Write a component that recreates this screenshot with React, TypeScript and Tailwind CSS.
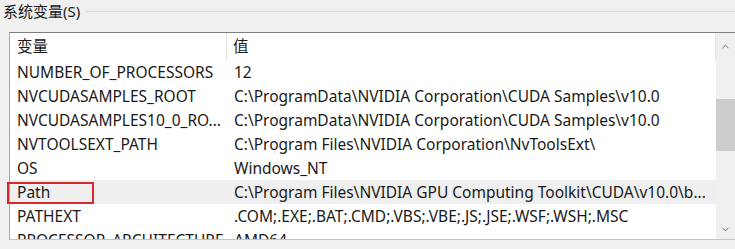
import { ChevronUp, ChevronDown } from "lucide-react";

// ------------------ Data ------------------
interface EnvVar {
  name: string;
  value: string;
  selected?: boolean;
}

const rows: EnvVar[] = [
  { name: "NUMBER_OF_PROCESSORS", value: "12" },
  { name: "NVCUDASAMPLES_ROOT", value: "C:\\ProgramData\\NVIDIA Corporation\\CUDA Samples\\v10.0" },
  { name: "NVCUDASAMPLES10_0_RO...", value: "C:\\ProgramData\\NVIDIA Corporation\\CUDA Samples\\v10.0" },
  { name: "NVTOOLSEXT_PATH", value: "C:\\Program Files\\NVIDIA Corporation\\NvToolsExt\\" },
  { name: "OS", value: "Windows_NT" },
  {
    name: "Path",
    value: "C:\\Program Files\\NVIDIA GPU Computing Toolkit\\CUDA\\v10.0\\b...",
    selected: true,
  },
  { name: "PATHEXT", value: ".COM;.EXE;.BAT;.CMD;.VBS;.VBE;.JS;.JSE;.WSF;.WSH;.MSC" },
  { name: "PROCESSOR_ARCHITECTURE", value: "AMD64" },
];

const font = "font-['Noto_Sans','Noto_Sans_CJK_SC',sans-serif]";

// ------------------ Component ------------------
const App = () => {
  return (
    <div
      className={`relative w-[735px] h-[249px] overflow-hidden bg-[#f0f0f0] text-[15.5px] text-[#1a1a1a] ${font}`}
    >
      {/* Group title */}
      <div className="flex items-center h-[22px] pl-[3px]">
        <span className="leading-none text-[15px]">系统变量(S)</span>
        <div className="flex-1 h-px bg-[#dcdcdc] ml-[6px]" />
      </div>

      {/* List box */}
      <div className="mt-[10px] ml-[9px] h-[208px] flex border-t border-l border-b border-t-[#7f7f7f] border-l-[#a8a8a8] border-b-[#c4c4c4] bg-white overflow-hidden">
        <div className="flex-1 overflow-hidden">
          {/* Header */}
          <div className="flex h-[27px] items-center">
            <div className="w-[217px] h-full pl-[7px] pt-px flex items-center border-r border-[#e5e5e5]">
              变量
            </div>
            <div className="flex-1 h-full pl-[6px] pt-px flex items-center border-r border-[#e5e5e5]">
              值
            </div>
          </div>

          {rows.map((row) => (
            <div
              key={row.name}
              className={`flex h-[24px] pt-px items-center whitespace-nowrap ${row.selected ? "bg-[#efefef]" : ""}`}
            >
              <div className="w-[217px] pl-[7px]">{row.name}</div>
              <div className="flex-1 pl-[7px]">{row.value}</div>
            </div>
          ))}
        </div>

        {/* Scrollbar */}
        <div className="w-[19px] bg-[#f0f0f0] flex flex-col items-center">
          <ChevronUp className="mt-[8px] w-[11px] h-[11px] text-[#606060]" strokeWidth={2} />
          <div className="mt-[47px] w-full h-[52px] bg-[#cdcdcd]" />
          <div className="flex-1" />
          <ChevronDown className="mb-[4px] w-[11px] h-[11px] text-[#606060]" strokeWidth={2} />
        </div>
      </div>

      {/* Annotation around the Path row */}
      <div className="absolute left-[7px] top-[182px] w-[87px] h-[22px] border-2 border-[#d42a2a]" />
    </div>
  );
};

export default App;
